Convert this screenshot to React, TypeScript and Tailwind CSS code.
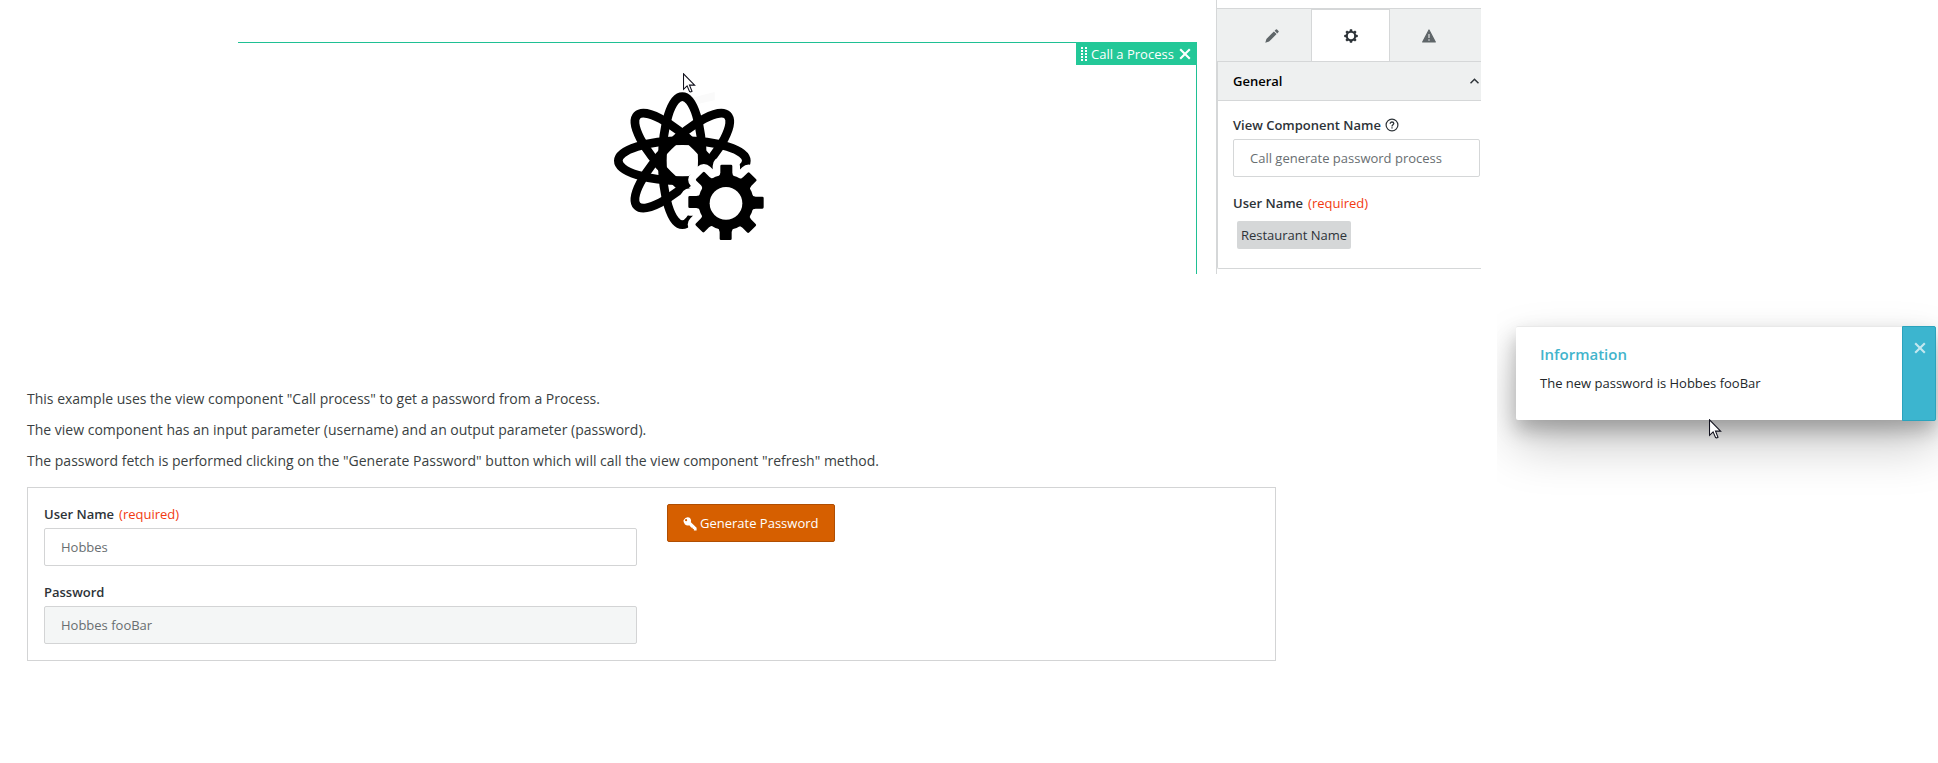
import React from "react";

const TOOTH_ANGLES = [0, 45, 90, 135, 180, 225, 270, 315];

function Cursor({ className }: { className: string }) {
  return (
    <svg className={className} width="13" height="20" viewBox="0 0 13 20">
      <path
        d="M.5.8V16.3L4.1 12.9L6.6 18.6Q7.6 19.2 9 18.2L6.5 12.1H11.6Z"
        fill="#fff"
        stroke="#10101c"
        strokeWidth="1.1"
      />
    </svg>
  );
}

function GearShape() {
  return (
    <>
      <circle cx="378" cy="427" r="83" />
      {TOOTH_ANGLES.map((a) => (
        <path
          key={a}
          transform={`rotate(${a} 378 427)`}
          d="M353 352Q361 346 361 338V318Q361 314 365 314H393Q397 314 397 318V338Q397 346 404 352Z"
        />
      ))}
    </>
  );
}

function AtomGear() {
  return (
    <svg className="absolute left-[600px] top-[60px]" width="180" height="190" viewBox="0 0 540 570">
      <path d="M270 115L344 96V121L275 136Z" fill="#fafafa" />
      <g fill="none" stroke="#000" strokeWidth="26">
        {[0, 45, 90, 135].map((a) => (
          <ellipse key={a} cx="247" cy="302" rx="60" ry="192" transform={`rotate(${a} 247 302)`} />
        ))}
      </g>
      <g fill="#fff" stroke="#fff" strokeWidth="46" strokeLinejoin="round">
        <GearShape />
      </g>
      <g fill="#000">
        <GearShape />
      </g>
      <circle cx="378" cy="430" r="49" fill="#fff" />
    </svg>
  );
}

function PencilIcon() {
  return (
    <svg width="14" height="14" viewBox="0 0 14 14" fill="#5f6669">
      <path d="M.3 13.7L1.4 9.9L8.9 2.4L11.6 5.1L4.1 12.6ZM9.6 1.7L10.9.5Q11.4 0 12 .5L13.5 2Q14 2.6 13.5 3.1L12.3 4.4Z" />
    </svg>
  );
}

function SmallGear() {
  return (
    <svg width="14" height="14" viewBox="-7 -7 14 14">
      <circle r="4.2" fill="none" stroke="#2d3338" strokeWidth="2.1" />
      {TOOTH_ANGLES.map((a) => (
        <path key={a} transform={`rotate(${a})`} d="M-1.5-4.6L-1.1-6.8H1.1L1.5-4.6Z" fill="#2d3338" />
      ))}
    </svg>
  );
}

function WarningIcon() {
  return (
    <svg width="14" height="14" viewBox="0 0 14 14">
      <path d="M7 1L13.3 13H.7Z" fill="#5f6669" stroke="#5f6669" strokeWidth="1.2" strokeLinejoin="round" />
      <path d="M7 5V9M7 10.2V11.7" stroke="#d4d7d8" strokeWidth="1.3" />
    </svg>
  );
}

function HelpIcon() {
  return (
    <svg width="14" height="14" viewBox="0 0 14 14" fill="none" stroke="#2d3338">
      <circle cx="7" cy="7" r="5.9" strokeWidth="1.2" />
      <path d="M5.2 5.7C5.2 3.4 8.8 3.5 8.8 5.6C8.8 6.8 7 6.9 7 8.4M7 9.2V10.4" strokeWidth="1.3" />
    </svg>
  );
}

function KeyIcon() {
  return (
    <svg width="14" height="14" viewBox="0 0 14 14">
      <path
        fillRule="evenodd"
        fill="#fff"
        d="M2.4.9L4.6.2Q6 .1 7 1.1Q8.7 2.9 7.9 5.3L13.6 10.7V13.5H10.9V12.1H9.7V10.7H8.5L6.2 8.2Q4 9 2 7.4Q.1 5.6.5 3.2ZM3.1 2.1A1.1 1.1 0 1 0 3.1 4.3A1.1 1.1 0 1 0 3.1 2.1Z"
      />
    </svg>
  );
}

function CloseIcon({ color }: { color: string }) {
  return (
    <svg width="12" height="12" viewBox="0 0 12 12" stroke={color} strokeWidth="2.1">
      <path d="M1.2 1.2L10.8 10.8M10.8 1.2L1.2 10.8" />
    </svg>
  );
}

function Required() {
  return <span className="ml-[5px] font-normal text-[#f23a10]">(required)</span>;
}

function Editor() {
  return (
    <section className="relative flex h-[274px] w-[1481px]">
      <div className="ml-[238px] mt-[42px] flex h-[232px] w-[959px] items-start justify-end border-r border-t border-[#1fc094]">
        <div className="-mr-px -mt-px flex h-[23px] w-[121px] items-center bg-[#23c898] pt-px text-[13px] text-white">
          <svg className="ml-[5px]" width="6" height="14" viewBox="0 0 6 14" fill="#fff">
            {[0, 3, 6, 9, 12].map((y) => (
              <path key={y} d={`M0 ${y}h2v2h-2zM4 ${y}h2v2h-2z`} />
            ))}
          </svg>
          <span className="ml-1 w-[83px] whitespace-nowrap pt-px">Call a Process</span>
          <span className="ml-[5px]">
            <CloseIcon color="#fff" />
          </span>
        </div>
      </div>
      <AtomGear />
      <Cursor className="absolute left-[683px] top-[73px]" />
      <aside className="ml-[19px] w-[265px] border-l border-[#d5d7d8] pt-2">
        <div className="flex h-[54px] border-b border-t border-[#d5d7d8] bg-[#eef0f0]">
          <div className="flex w-[94px] items-center justify-center pl-4 pt-[2px]">
            <PencilIcon />
          </div>
          <div className="flex h-[52px] w-[79px] items-center justify-center border-x border-t border-[#d5d7d8] bg-white pt-px">
            <SmallGear />
          </div>
          <div className="flex w-[78px] items-center justify-center pr-px pt-[2px]">
            <WarningIcon />
          </div>
        </div>
        <div className="h-[207px] rounded-bl-[2px] border-b border-l border-[#d5d7d8]">
          <div className="flex h-[39px] items-center justify-between border-b border-[#d5d7d8] bg-[#eef0f0] pl-[15px] pr-[2px]">
            <span className="pt-[2px] text-[13px] font-semibold text-black">General</span>
            <svg width="9" height="6" viewBox="0 0 9 6" fill="none" stroke="#2d3338" strokeWidth="1.5">
              <path d="M.5 5.2L4.5 1.2L8.5 5.2" />
            </svg>
          </div>
          <div className="pl-[15px] text-[13px]">
            <div className="flex h-[38px] items-end gap-1 pb-1 font-semibold leading-5 text-[#2d3338]">
              <span>View Component Name</span>
              <span className="mb-[3px]">
                <HelpIcon />
              </span>
            </div>
            <div className="flex h-[38px] w-[247px] items-center rounded-[2px] border border-[#d5d7d8] pl-4 pt-[2px] text-[#686e71]">
              Call generate password process
            </div>
            <div className="mt-[16px] h-5 font-semibold leading-5 text-[#2d3338]">
              User Name
              <Required />
            </div>
            <div className="ml-1 mt-2 flex h-7 w-[114px] items-center justify-center rounded-[2px] bg-[#d5d7d8] pt-[2px] text-[#2d3338]">
              Restaurant Name
            </div>
          </div>
        </div>
      </aside>
    </section>
  );
}

function Example() {
  return (
    <section className="ml-[27px] mt-[109px] w-[1249px]">
      <div className="text-[14px] leading-[31px] text-[#3a3f42]">
        <p>This example uses the view component "Call process" to get a password from a Process.</p>
        <p>The view component has an input parameter (username) and an output parameter (password).</p>
        <p>
          The password fetch is performed clicking on the "Generate Password" button which will call the view component
          "refresh" method.
        </p>
      </div>
      <div className="mt-[11px] flex h-[174px] border border-[#d3d4d5] px-4 pt-4 text-[13px]">
        <div className="w-[593px]">
          <div className="h-[24px] font-semibold leading-5 text-[#2d3338]">
            User Name
            <Required />
          </div>
          <div className="flex h-[38px] items-center rounded-[2px] border border-[#d3d4d5] pl-4 pt-[2px] text-[#686e71]">
            Hobbes
          </div>
          <div className="mt-4 h-[24px] font-semibold leading-5 text-[#2d3338]">Password</div>
          <div className="flex h-[38px] items-center rounded-[2px] border border-[#d3d4d5] bg-[#f4f6f6] pl-4 pt-[2px] text-[#686e71]">
            Hobbes fooBar
          </div>
        </div>
        <button className="ml-[30px] flex h-[38px] w-[168px] items-center whitespace-nowrap rounded-[2px] border border-[#b04e02] bg-[#d65f00] pl-[15px] pt-px text-white">
          <KeyIcon />
          <span className="ml-[3px] pt-px">Generate Password</span>
        </button>
      </div>
    </section>
  );
}

function Notification() {
  return (
    <div className="relative ml-4 h-[520px] w-[441px] overflow-hidden pl-[19px] pt-[326px]">
      <div className="flex h-[94px] w-[420px] rounded-[2px] border-t border-[#e9e9e9] bg-white shadow-[0_25px_50px_0_rgba(0,0,0,0.22),0_10px_20px_0_rgba(0,0,0,0.25)]">
        <div className="w-[386px] pl-6 pt-4">
          <h2 className="text-[15px] font-semibold leading-[22px] text-[#42b4cc]">Information</h2>
          <p className="mt-2 text-[13px] leading-5 text-[#22272a]">The new password is Hobbes fooBar</p>
        </div>
        <div className="-mt-px flex h-[95px] w-[34px] justify-center rounded-r-[2px] border border-[#2aa3bd] bg-[#3cb5cf] pl-px pt-[15px]">
          <CloseIcon color="#c4e8f0" />
        </div>
      </div>
      <Cursor className="absolute left-[212px] top-[419px]" />
    </div>
  );
}

export default function App() {
  return (
    <main className="flex h-[763px] w-[1938px] items-start overflow-hidden bg-white font-['Open_Sans',sans-serif]">
      <div className="w-[1481px]">
        <Editor />
        <Example />
      </div>
      <Notification />
    </main>
  );
}
